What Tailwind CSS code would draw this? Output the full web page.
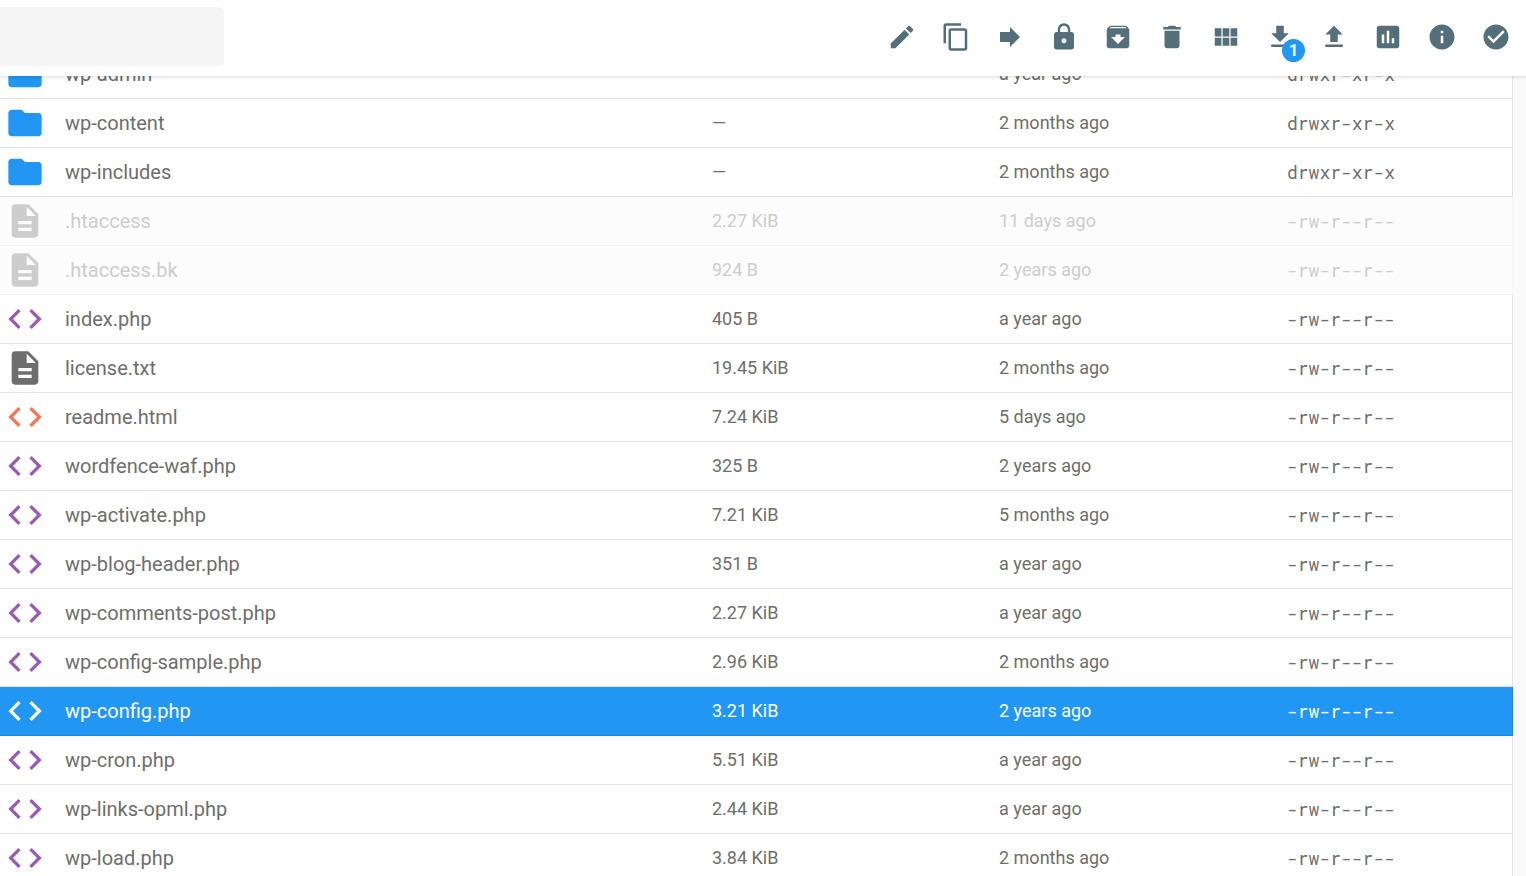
<!DOCTYPE html>
<html lang="en">
<head>
<meta charset="utf-8">
<meta name="viewport" content="width=device-width, initial-scale=1">
<title>File manager</title>
<script src="https://cdn.jsdelivr.net/npm/@tailwindcss/browser@4"></script>
</head>
<body class="h-screen overflow-hidden bg-[#fafafa] font-['Roboto',sans-serif] text-[#6e6e6e]">

<svg class="hidden" aria-hidden="true">
  <symbol id="folder" viewBox="0 0 24 24"><path d="M10 4H4c-1.1 0-1.99.9-1.99 2L2 18c0 1.1.9 2 2 2h16c1.1 0 2-.9 2-2V8c0-1.1-.9-2-2-2h-8l-2-2z"/></symbol>
  <symbol id="doc" viewBox="0 0 24 24"><path d="M14 2H6c-1.1 0-1.99.9-1.99 2L4 20c0 1.1.89 2 1.99 2H18c1.1 0 2-.9 2-2V8l-6-6zm2 16H8v-2h8v2zm0-4H8v-2h8v2zm-3-5V3.500L18.500 9H13z"/></symbol>
  <symbol id="code" viewBox="0 0 24 24"><path d="M9.400 16.600L4.800 12l4.600-4.600L8 6l-6 6 6 6 1.400-1.400zm5.200 0l4.600-4.600-4.600-4.600L16 6l6 6-6 6-1.400-1.400z"/></symbol>
</svg>

<header class="relative z-10 flex h-[76px] items-start justify-between bg-white pt-[7px] pr-[3px] shadow-[0_1px_4px_rgba(0,0,0,0.15)]">
  <input type="text" aria-label="Search" class="h-[59px] w-56 rounded-r-[5px] bg-[#f5f5f5] px-4 text-lg outline-none">
  <div role="toolbar" aria-label="File actions" class="flex text-[#546e7a]">
    <button type="button" aria-label="Rename" class="flex h-[60px] w-[54px] items-center justify-center"><svg class="size-[30px] fill-current" viewBox="0 0 24 24"><path d="M3 17.250V21h3.750L17.810 9.940l-3.750-3.750L3 17.250zM20.710 7.040a1 1 0 0 0 0-1.410l-2.340-2.340a1 1 0 0 0-1.410 0l-1.830 1.830 3.750 3.750 1.830-1.830z"/></svg></button>
    <button type="button" aria-label="Copy" class="flex h-[60px] w-[54px] items-center justify-center"><svg class="size-[30px] fill-current" viewBox="0 0 24 24"><path d="M16 1H4c-1.100 0-2 .9-2 2v14h2V3h12V1zm3 4H8c-1.100 0-2 .9-2 2v14c0 1.100.9 2 2 2h11c1.100 0 2-.9 2-2V7c0-1.100-.9-2-2-2zm0 16H8V7h11v14z"/></svg></button>
    <button type="button" aria-label="Move" class="flex h-[60px] w-[54px] items-center justify-center"><svg class="size-[30px] fill-current" viewBox="0 0 24 24"><path d="M12 8V4l8 8-8 8v-4H4V8z"/></svg></button>
    <button type="button" aria-label="Permissions" class="flex h-[60px] w-[54px] items-center justify-center"><svg class="size-[30px] fill-current" viewBox="0 0 24 24"><path d="M18 8h-1V6c0-2.760-2.240-5-5-5S7 3.240 7 6v2H6c-1.100 0-2 .9-2 2v10c0 1.100.9 2 2 2h12c1.100 0 2-.9 2-2V10c0-1.100-.9-2-2-2zm-6 9c-1.100 0-2-.9-2-2s.9-2 2-2 2 .9 2 2-.9 2-2 2zm3.100-9H8.900V6c0-1.710 1.390-3.100 3.100-3.100s3.100 1.390 3.100 3.100v2z"/></svg></button>
    <button type="button" aria-label="Archive" class="flex h-[60px] w-[54px] items-center justify-center"><svg class="size-[30px] fill-current" viewBox="0 0 24 24"><path d="M20.540 5.230l-1.390-1.680C18.880 3.210 18.470 3 18 3H6c-.47 0-.88.21-1.160.55L3.460 5.230C3.170 5.570 3 6.020 3 6.500V19c0 1.100.9 2 2 2h14c1.100 0 2-.9 2-2V6.500c0-.48-.17-.93-.46-1.270zM12 17.500L6.500 12H10v-2h4v2h3.500L12 17.500zM5.120 5l.81-1h12l.94 1H5.120z"/></svg></button>
    <button type="button" aria-label="Delete" class="flex h-[60px] w-[54px] items-center justify-center"><svg class="size-[30px] fill-current" viewBox="0 0 24 24"><path d="M6 19c0 1.100.9 2 2 2h8c1.100 0 2-.9 2-2V7H6v12zM19 4h-3.500l-1-1h-5l-1 1H5v2h14V4z"/></svg></button>
    <button type="button" aria-label="Grid view" class="flex h-[60px] w-[54px] items-center justify-center"><svg class="size-[30px] fill-current" viewBox="0 0 24 24"><path d="M3 5h5.330v6.500H3zM9.330 5h5.340v6.500H9.330zM15.670 5H21v6.500h-5.330zM3 12.500h5.330V19H3zM9.330 12.500h5.340V19H9.330zM15.670 12.500H21V19h-5.330z"/></svg></button>
    <button type="button" aria-label="Download, 1 selected" class="relative flex h-[60px] w-[54px] items-center justify-center"><svg class="size-[30px] fill-current" viewBox="0 0 24 24"><path d="M19 9h-4V3H9v6H5l7 7 7-7zM5 18v2h14v-2H5z"/></svg><span class="absolute right-[2px] bottom-[5px] flex size-[23px] items-center justify-center rounded-full bg-[#2196f3] text-base leading-none font-bold text-white">1</span></button>
    <button type="button" aria-label="Upload" class="flex h-[60px] w-[54px] items-center justify-center"><svg class="size-[30px] fill-current" viewBox="0 0 24 24"><path d="M9 16h6v-6h4l-7-7-7 7h4zm-4 2h14v2H5z"/></svg></button>
    <button type="button" aria-label="Disk usage" class="flex h-[60px] w-[54px] items-center justify-center"><svg class="size-[30px] fill-current" viewBox="0 0 24 24"><path d="M19 3H5c-1.100 0-2 .9-2 2v14c0 1.100.9 2 2 2h14c1.100 0 2-.9 2-2V5c0-1.100-.9-2-2-2zM9 17H7v-7h2v7zm4 0h-2V7h2v10zm4 0h-2v-4h2v4z"/></svg></button>
    <button type="button" aria-label="Info" class="flex h-[60px] w-[54px] items-center justify-center"><svg class="size-[30px] fill-current" viewBox="0 0 24 24"><path d="M12 2C6.480 2 2 6.480 2 12s4.480 10 10 10 10-4.480 10-10S17.520 2 12 2zm1 15h-2v-6h2v6zm0-8h-2V7h2v2z"/></svg></button>
    <button type="button" aria-label="Select all" class="flex h-[60px] w-[54px] items-center justify-center"><svg class="size-[30px] fill-current" viewBox="0 0 24 24"><path d="M12 2C6.480 2 2 6.480 2 12s4.480 10 10 10 10-4.480 10-10S17.520 2 12 2zm-2 15l-5-5 1.410-1.410L10 14.170l7.590-7.590L19 8l-9 9z"/></svg></button>
  </div>
</header>

<!-- The list is scrolled partly under the toolbar -->
<main class="-mt-[26px] pr-[13px]">
  <table aria-label="Files" class="w-full table-fixed border-separate border-spacing-0 bg-white text-left text-lg leading-6">
    <colgroup><col class="w-[65px]"><col><col class="w-[287px]"><col class="w-[288px]"><col class="w-[226px]"></colgroup>
    <tbody id="files"></tbody>
  </table>
</main>

<script>
const files = [
  ['folder', 'wp-admin', '—', 'a year ago', 'drwxr-xr-x'],
  ['folder', 'wp-content', '—', '2 months ago', 'drwxr-xr-x'],
  ['folder', 'wp-includes', '—', '2 months ago', 'drwxr-xr-x'],
  ['hidden', '.htaccess', '2.27 KiB', '11 days ago', '-rw-r--r--'],
  ['hidden', '.htaccess.bk', '924 B', '2 years ago', '-rw-r--r--'],
  ['php', 'index.php', '405 B', 'a year ago', '-rw-r--r--'],
  ['text', 'license.txt', '19.45 KiB', '2 months ago', '-rw-r--r--'],
  ['html', 'readme.html', '7.24 KiB', '5 days ago', '-rw-r--r--'],
  ['php', 'wordfence-waf.php', '325 B', '2 years ago', '-rw-r--r--'],
  ['php', 'wp-activate.php', '7.21 KiB', '5 months ago', '-rw-r--r--'],
  ['php', 'wp-blog-header.php', '351 B', 'a year ago', '-rw-r--r--'],
  ['php', 'wp-comments-post.php', '2.27 KiB', 'a year ago', '-rw-r--r--'],
  ['php', 'wp-config-sample.php', '2.96 KiB', '2 months ago', '-rw-r--r--'],
  ['selected', 'wp-config.php', '3.21 KiB', '2 years ago', '-rw-r--r--'],
  ['php', 'wp-cron.php', '5.51 KiB', 'a year ago', '-rw-r--r--'],
  ['php', 'wp-links-opml.php', '2.44 KiB', 'a year ago', '-rw-r--r--'],
  ['php', 'wp-load.php', '3.84 KiB', '2 months ago', '-rw-r--r--'],
];
const kinds = {
  folder:   { icon: 'folder', color: 'fill-[#2196f3]', row: '' },
  hidden:   { icon: 'doc', color: 'fill-[#cdcdcd]', row: 'bg-[#fcfcfc] text-[#cdcdcd]' },
  text:     { icon: 'doc', color: 'fill-[#6e6e6e]', row: '' },
  php:      { icon: 'code', color: 'fill-[#9b59b6]', row: '' },
  html:     { icon: 'code', color: 'fill-[#f8764e]', row: '' },
  selected: { icon: 'code', color: 'fill-white', row: 'bg-[#2196f3] text-white' },
};
document.getElementById('files').innerHTML = files.map(([kind, name, size, modified, mode]) => {
  const k = kinds[kind];
  const line = kind === 'hidden' ? 'border-black/4' : 'border-black/11';
  return `<tr class="${k.row}"${kind === 'selected' ? ' aria-selected="true"' : ''}>
    <td class="h-[49px] border-b pl-[5px] ${line}"><svg class="size-10 ${k.color}" aria-hidden="true"><use href="#${k.icon}"/></svg></td>
    <td class="border-b text-xl leading-6 ${line}">${name}</td>
    <td class="border-b ${line}">${size}</td>
    <td class="border-b ${line}">${modified}</td>
    <td class="border-r border-b font-['Roboto_Mono','Liberation_Mono',monospace] ${line}">${mode}</td>
  </tr>`;
}).join('');
</script>
</body>
</html>
